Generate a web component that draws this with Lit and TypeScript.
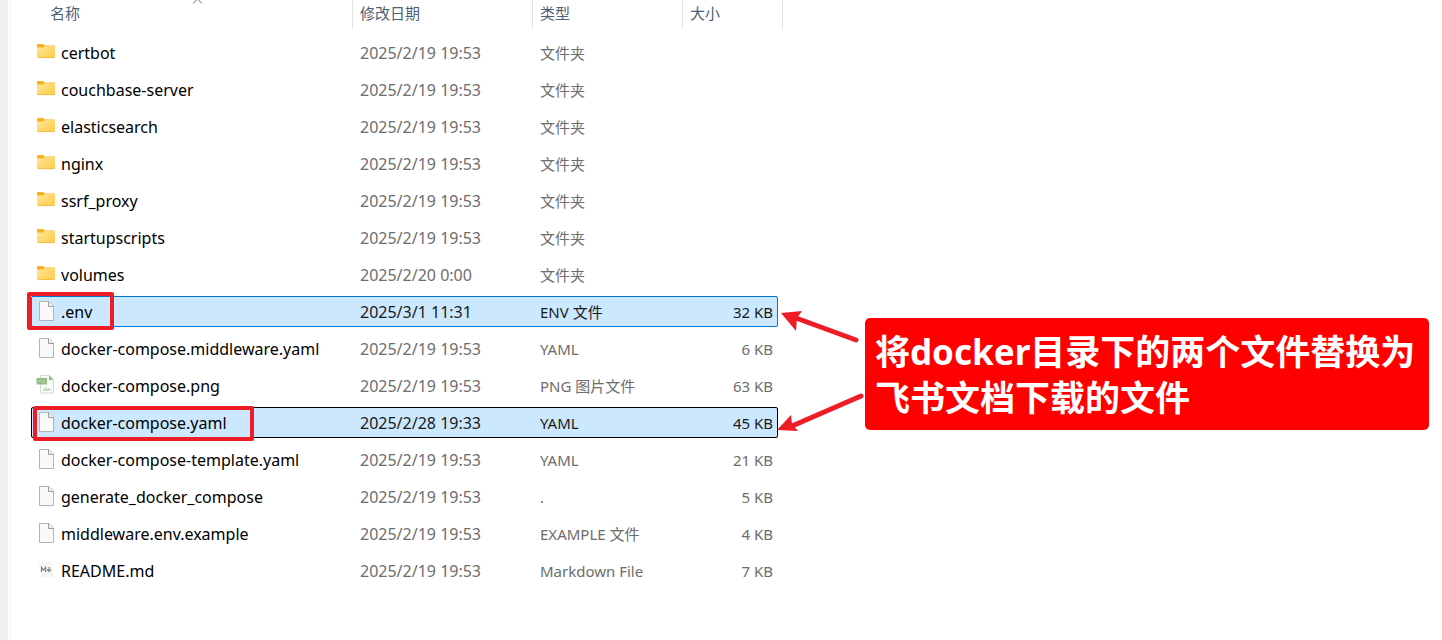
import { LitElement, html, css, svg, nothing } from "lit";
import { customElement } from "lit/decorators.js";
import { classMap } from "lit/directives/class-map.js";

type Kind = "folder" | "file" | "png" | "md";

interface Entry {
  name: string;
  date: string;
  type: string;
  size?: string;
  kind: Kind;
  selected?: boolean;
  focused?: boolean;
}

const OLD = "2025/2/19 19:53";
const DIR = "文件夹";

const ENTRIES: Entry[] = [
  { name: "certbot", date: OLD, type: DIR, kind: "folder" },
  { name: "couchbase-server", date: OLD, type: DIR, kind: "folder" },
  { name: "elasticsearch", date: OLD, type: DIR, kind: "folder" },
  { name: "nginx", date: OLD, type: DIR, kind: "folder" },
  { name: "ssrf_proxy", date: OLD, type: DIR, kind: "folder" },
  { name: "startupscripts", date: OLD, type: DIR, kind: "folder" },
  { name: "volumes", date: "2025/2/20 0:00", type: DIR, kind: "folder" },
  { name: ".env", date: "2025/3/1 11:31", type: "ENV 文件", size: "32 KB", kind: "file", selected: true },
  { name: "docker-compose.middleware.yaml", date: OLD, type: "YAML", size: "6 KB", kind: "file" },
  { name: "docker-compose.png", date: OLD, type: "PNG 图片文件", size: "63 KB", kind: "png" },
  { name: "docker-compose.yaml", date: "2025/2/28 19:33", type: "YAML", size: "45 KB", kind: "file", selected: true, focused: true },
  { name: "docker-compose-template.yaml", date: OLD, type: "YAML", size: "21 KB", kind: "file" },
  { name: "generate_docker_compose", date: OLD, type: ".", size: "5 KB", kind: "file" },
  { name: "middleware.env.example", date: OLD, type: "EXAMPLE 文件", size: "4 KB", kind: "file" },
  { name: "README.md", date: OLD, type: "Markdown File", size: "7 KB", kind: "md" },
];

const GLYPHS = {
  folder: svg`
    <defs><linearGradient id="g" x1="0" y1="0" x2="1" y2="1">
      <stop offset="0" stop-color="#ffe69a"/><stop offset="1" stop-color="#fdcb45"/>
    </linearGradient></defs>
    <path d="M1 4a1 1 0 0 1 1-1h5l2 1.500h9a1 1 0 0 1 1 1V10H1z" fill="#f5b31f"/>
    <path d="M1 6.500h6.500L9 5h9.500l.5.500V16l-1 1H2l-1-1z" fill="url(#g)"/>
    <path d="M1.500 16.600h17" stroke="#efb63a" stroke-width=".8"/>`,
  file: svg`
    <path d="M3.500 1.500h9.500l4.500 4.500v14.500h-14z" fill="#fafafa" stroke="#b4b4b4"/>
    <path d="M12.500 1.500v5h5" fill="#f0f0f0" stroke="#9c9c9c"/>`,
  png: svg`
    <path d="M4.500 1.500h9l4 4v13.500h-13z" fill="#fbfdfb" stroke="#cfe0cb"/>
    <path d="M13 1.500l4.500 4.500H13z" fill="#8fbb80"/>
    <path d="M6.500 17l3-4 2 2 1.500-1.500 3 3.500z" fill="#c9dfc5"/>
    <path d="M.5 4h10.500v6.500H.5z" fill="#93bd86"/>
    <path d="M2.500 9V6h1.500v1.500H2.500M5.500 9V6L7 9V6M9.800 6H8.500v3h1.300V7.700" fill="none" stroke="#b4d2ab" stroke-width=".6"/>`,
  md: svg`
    <path d="M3 3l13-1 1.500 15.500L5 19z" fill="#f4f4f4"/>
    <path d="M5.500 13V8.500l2 2.500 2-2.500V13" fill="none" stroke="#808080" stroke-width="1.200"/>
    <path d="M13 8v4.500M11 10.500l2 2 2-2" fill="none" stroke="#808080" stroke-width="1.200"/>`,
};

@customElement("file-row-icon")
export class FileRowIcon extends LitElement {
  static properties = { kind: { type: String } };
  declare kind: Kind;

  static styles = css`
    :host { display: block; width: 20px; height: 22px; }
    svg { display: block; }
  `;

  render() {
    return html`<svg width="20" height="22" viewBox="0 0 20 22" aria-hidden="true">${GLYPHS[this.kind]}</svg>`;
  }
}

@customElement("app-root")
export class AppRoot extends LitElement {
  static styles = css`
    :host {
      display: flex;
      min-height: 100vh;
      overflow: hidden;
      background: #fff;
      font: 15px/30px "Noto Sans", "Noto Sans CJK SC", sans-serif;
      color: #6d6d6d;
    }
    .gutter {
      flex: none;
      width: 8px;
      margin-right: 2px;
      background: #f0f0f0;
    }
    .files {
      flex: none;
      padding-left: 20px;
      border-left: 1px solid #f5f5f5;
    }
    table, thead, tbody { display: block; }
    tbody { margin-right: 5px; }
    tr {
      display: grid;
      grid-template-columns: 321px 180px 150px 96px;
      text-align: left;
    }
    thead tr {
      grid-template-columns: 322px 180px 150px 100px;
      margin-bottom: 8px;
    }
    th {
      position: relative;
      padding: 0;
      border-right: 1px solid #e2e2e2;
      font-weight: 400;
    }
    th button {
      display: block;
      width: 100%;
      height: 29px;
      padding: 0 7px 2px;
      border: 0;
      background: none;
      color: #4c607a;
      font: inherit;
      line-height: 27px;
      text-align: left;
    }
    th:first-child button { padding-left: 19px; }
    .sort { position: absolute; left: 160px; top: 0; }
    tbody tr {
      height: 31px;
      margin-bottom: 6px;
      border-radius: 2px;
    }
    td { padding: 1px 0 0 8px; }
    .name {
      position: relative;
      display: flex;
      gap: 5px;
      padding-left: 5px;
      color: #000;
    }
    .name, .date { font-size: 16px; }
    .name file-row-icon { margin-top: 3px; }
    .size { padding-right: 5px; text-align: right; }
    .selected {
      background: #cce8ff;
      color: #1a1a1a;
      outline: 1px solid #0078d7;
      outline-offset: -1px;
    }
    .focused { outline-color: #000; }
    .mark {
      position: absolute;
      inset: -4px auto auto -4px;
      box-sizing: border-box;
      width: 87px;
      height: 38px;
      border: 4px solid #ee1c25;
      border-radius: 2px;
    }
    .focused .mark {
      inset: -1px auto auto 2px;
      width: 221px;
      height: 35px;
    }
    .notes {
      display: flex;
      flex: 1;
      align-items: flex-start;
      padding: 308px 13px 0 0;
    }
    .arrows { flex: none; margin-left: -5px; }
    .callout {
      flex: 1;
      margin: 10px 0 0;
      padding: 11px 0 9px 10px;
      border-radius: 5px;
      background: #f00;
      color: #fff;
      font-size: 35px;
      font-weight: 700;
      line-height: 46px;
      white-space: nowrap;
    }
  `;

  private row(e: Entry) {
    return html`<tr class=${classMap({ selected: !!e.selected, focused: !!e.focused })}>
      <td class="name">
        <file-row-icon kind=${e.kind}></file-row-icon><span>${e.name}</span>
        ${e.selected ? html`<i class="mark"></i>` : nothing}
      </td>
      <td class="date">${e.date}</td>
      <td>${e.type}</td>
      <td class="size">${e.size ?? ""}</td>
    </tr>`;
  }

  render() {
    const sortArrow = html`<svg class="sort" width="13" height="4" viewBox="0 0 13 4" aria-hidden="true">
      <path d="M2 3.500L6.500-1 11 3.500" fill="none" stroke="#6a6a6a"/>
    </svg>`;
    return html`
      <div class="gutter"></div>
      <main class="files">
        <table>
          <thead>
            <tr>
              ${["名称", "修改日期", "类型", "大小"].map(
                (t, i) => html`<th scope="col"><button type="button">${t}</button>${i === 0 ? sortArrow : nothing}</th>`
              )}
            </tr>
          </thead>
          <tbody>${ENTRIES.map((e) => this.row(e))}</tbody>
        </table>
      </main>
      <aside class="notes">
        <svg class="arrows" width="87" height="130" viewBox="0 0 87 130" aria-hidden="true">
          <g fill="#ee1c25" stroke="#ee1c25" stroke-linecap="round">
            <path d="M78 32L18 10" stroke-width="5"/>
            <path d="M3 5l21-2-5 7-1 13z" stroke="none"/>
            <path d="M83 88L14 118" stroke-width="5"/>
            <path d="M-1 122l14-15 1 9 6 7z" stroke="none"/>
          </g>
        </svg>
        <p class="callout">将docker目录下的两个文件替换为<br />飞书文档下载的文件</p>
      </aside>
    `;
  }
}
